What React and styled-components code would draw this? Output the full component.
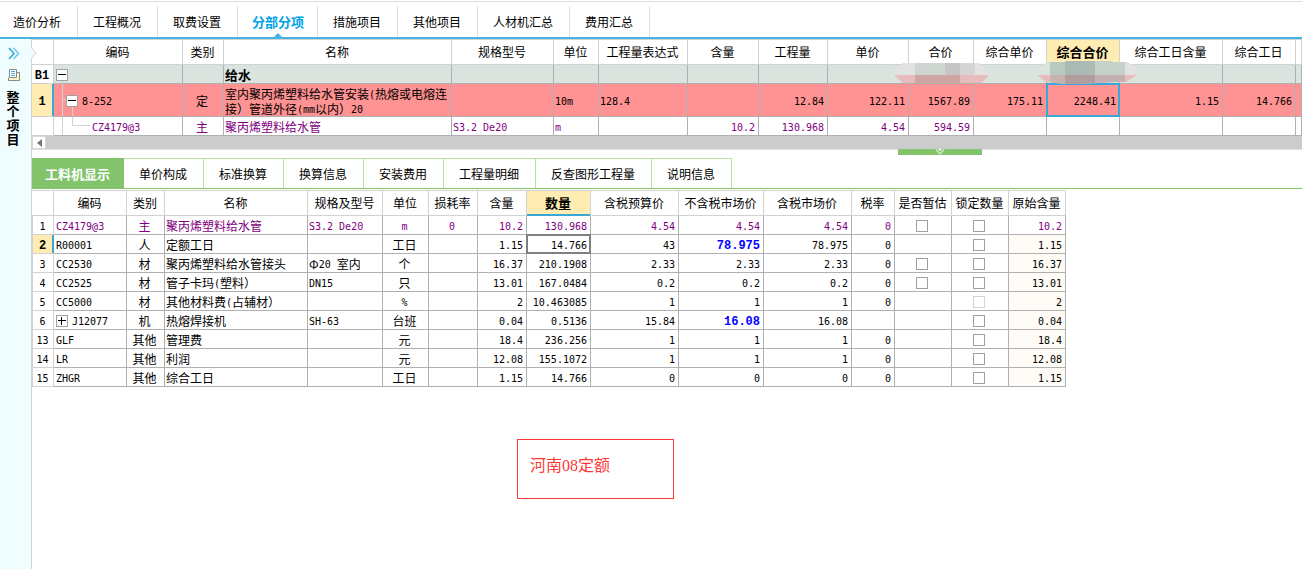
import { useState } from "react";
import styled, { createGlobalStyle, css } from "styled-components";

const colors = {
  blue: "#3aa8d6",
  line: "#d2d2d2",
  cellLine: "#b0b0b0",
  green: "#82c36b",
  lightGreen: "#b4e59b",
  yellow: "#ffecb3",
  red: "#ff9292",
  band: "#dae3de",
  purple: "#800080",
};

const mainTabs = [
  "造价分析",
  "工程概况",
  "取费设置",
  "分部分项",
  "措施项目",
  "其他项目",
  "人材机汇总",
  "费用汇总",
];

const detailTabs = [
  "工料机显示",
  "单价构成",
  "标准换算",
  "换算信息",
  "安装费用",
  "工程量明细",
  "反查图形工程量",
  "说明信息",
];

const itemColumns = [
  { title: "", width: 22 },
  { title: "编码", width: 129 },
  { title: "类别", width: 41 },
  { title: "名称", width: 228 },
  { title: "规格型号", width: 102 },
  { title: "单位", width: 45 },
  { title: "工程量表达式", width: 89 },
  { title: "含量", width: 71 },
  { title: "工程量", width: 69 },
  { title: "单价", width: 81 },
  { title: "合价", width: 65 },
  { title: "综合单价", width: 73 },
  { title: "综合合价", width: 73, active: true },
  { title: "综合工日含量", width: 103 },
  { title: "综合工日", width: 73 },
  { title: "" },
];

const detailColumns = [
  { title: "", width: 22 },
  { title: "编码", width: 73 },
  { title: "类别", width: 38 },
  { title: "名称", width: 143 },
  { title: "规格及型号", width: 75 },
  { title: "单位", width: 46 },
  { title: "损耗率", width: 49 },
  { title: "含量", width: 49 },
  { title: "数量", width: 64, active: true },
  { title: "含税预算价", width: 88 },
  { title: "不含税市场价", width: 85 },
  { title: "含税市场价", width: 88 },
  { title: "税率", width: 43 },
  { title: "是否暂估", width: 57 },
  { title: "锁定数量", width: 57 },
  { title: "原始含量", width: 57 },
];

const details = [
  { no: 1, code: "CZ4179@3", kind: "主", name: "聚丙烯塑料给水管", spec: "S3.2 De20", unit: "m", loss: "0", content: "10.2", amount: "130.968", budget: "4.54", net: "4.54", gross: "4.54", rate: "0", estimate: true, main: true },
  { no: 2, code: "R00001", kind: "人", name: "定额工日", unit: "工日", content: "1.15", amount: "14.766", budget: "43", net: "78.975", gross: "78.975", rate: "0", changed: true, selected: true },
  { no: 3, code: "CC2530", kind: "材", name: "聚丙烯塑料给水管接头", spec: "Φ20 室内", unit: "个", content: "16.37", amount: "210.1908", budget: "2.33", net: "2.33", gross: "2.33", rate: "0", estimate: true },
  { no: 4, code: "CC2525", kind: "材", name: "管子卡玛(塑料）", spec: "DN15", unit: "只", content: "13.01", amount: "167.0484", budget: "0.2", net: "0.2", gross: "0.2", rate: "0", estimate: true },
  { no: 5, code: "CC5000", kind: "材", name: "其他材料费(占辅材）", unit: "%", content: "2", amount: "10.463085", budget: "1", net: "1", gross: "1", rate: "0", locked: true },
  { no: 6, code: "J12077", kind: "机", name: "热熔焊接机", spec: "SH-63", unit: "台班", content: "0.04", amount: "0.5136", budget: "15.84", net: "16.08", gross: "16.08", changed: true, children: true },
  { no: 13, code: "GLF", kind: "其他", name: "管理费", unit: "元", content: "18.4", amount: "236.256", budget: "1", net: "1", gross: "1", rate: "0" },
  { no: 14, code: "LR", kind: "其他", name: "利润", unit: "元", content: "12.08", amount: "155.1072", budget: "1", net: "1", gross: "1", rate: "0" },
  { no: 15, code: "ZHGR", kind: "其他", name: "综合工日", unit: "工日", content: "1.15", amount: "14.766", budget: "0", net: "0", gross: "0", rate: "0" },
];

// Latin runs get a half-width monospace face, everything else stays in the CJK font
const Mixed = ({ children, bold }) =>
  String(children ?? "")
    .split(/([\x20-\x7e]+)/)
    .filter(Boolean)
    .map((part, i) =>
      /^[\x20-\x7e]/.test(part) ? (
        <Latin key={i} $bold={bold}>
          {part}
        </Latin>
      ) : (
        part
      )
    );

const Columns = ({ columns }) => (
  <>
    <colgroup>
      {columns.map((col, i) => (
        <Col key={i} $width={col.width} />
      ))}
    </colgroup>
    <thead>
      <tr>
        {columns.map((col, i) => (
          <HeadCell key={i} scope="col" $active={col.active}>
            {col.title}
          </HeadCell>
        ))}
      </tr>
    </thead>
  </>
);

const Toggle = ({ label, open }) => (
  <ToggleButton type="button" aria-label={label}>
    <svg width="10" height="10" viewBox="0 0 10 10" stroke="#000" fill="none">
      <path d={open ? "M1 4.5H9" : "M1 4.5H9M4.5 1V9"} />
    </svg>
  </ToggleButton>
);

const Mosaic = () => (
  <MosaicLayer width="243" height="23" viewBox="0 0 243 23" aria-hidden="true">
    <clipPath id="pillA">
      <path d="M8 2H84L93 9V16L86 22H8L0 15V9Z" />
    </clipPath>
    <clipPath id="pillB">
      <path d="M153 1H169L172 0H216L219 1H232L242 7V14L231 21H219L186 23H171L151 21L142 14H148V3Z" />
    </clipPath>
    <g clipPath="url(#pillA)">
      <rect width="20" height="14" fill="#e2e2e2" />
      <rect x="20" width="30" height="14" fill="#cfd5d1" />
      <rect x="50" width="15" height="14" fill="#c5c6c5" />
      <rect x="65" width="15" height="14" fill="#d5d5d5" />
      <rect x="80" width="15" height="14" fill="#e2e2e2" />
      <rect y="14" width="95" height="9" fill="#e6bcbc" />
      <rect x="20" y="14" width="45" height="9" fill="#cea5a3" />
    </g>
    <g clipPath="url(#pillB)">
      <rect x="142" width="13" height="14" fill="#dbe3df" />
      <rect x="155" width="15" height="14" fill="#b8c9bf" />
      <rect x="170" width="30" height="14" fill="#abbab4" />
      <rect x="200" width="30" height="14" fill="#c5d1c9" />
      <rect x="230" width="13" height="14" fill="#e2e2e2" />
      <rect x="142" y="14" width="101" height="9" fill="#e6bcbc" />
      <rect x="155" y="14" width="15" height="9" fill="#c8b2af" />
      <rect x="170" y="14" width="30" height="9" fill="#b09d9e" />
      <rect x="200" y="14" width="30" height="9" fill="#c5b0b1" />
    </g>
  </MosaicLayer>
);

function App() {
  const [mainTab, setMainTab] = useState("分部分项");
  const [detailTab, setDetailTab] = useState("工料机显示");

  return (
    <Page>
      <GlobalStyle />
      <MainTabs>
        {mainTabs.map((tab) => (
          <MainTab
            key={tab}
            type="button"
            $active={tab === mainTab}
            onClick={() => setMainTab(tab)}
          >
            {tab}
          </MainTab>
        ))}
      </MainTabs>

      <Body>
        <Sidebar>
          <IconButton type="button" aria-label="展开">
            <svg width="12" height="13" viewBox="0 0 12 13" fill="none" strokeWidth="1.5">
              <path d="M1 1L6 6.5L1 12" stroke="#2da3e0" />
              <path d="M5.5 1L10.5 6.5L5.5 12" stroke="#74c4ea" />
            </svg>
          </IconButton>
          <IconButton type="button" aria-label="项目">
            <svg width="12" height="12" viewBox="0 0 12 12" fill="none">
              <path d="M8.5 3.5H11.5V11.5H0.5V8.5" fill="#fff4c4" stroke="#8a8a8a" />
              <path d="M1.5 0.5H8.5V8.5H1.5Z" fill="#fff" stroke="#8a8a8a" />
              <path d="M3 2.5H7M3 4.5H7M3 6.5H7" stroke="#4aa9d8" />
            </svg>
          </IconButton>
          <SideTitle>整个项目</SideTitle>
        </Sidebar>

        <Content>
          <ItemPanel>
            <Notch width="6" height="12" viewBox="0 0 6 12" aria-hidden="true">
              <path d="M0 0L5 6L0 12Z" fill="#f0fdff" />
              <path d="M0 0L5 6L0 12" fill="none" stroke="#d2d2d2" />
            </Notch>
            <Grid $fill>
              <Columns columns={itemColumns} />
              <tbody>
                <Row $background={colors.band}>
                  <NumberCell>
                    <Mixed bold>B1</Mixed>
                  </NumberCell>
                  <TreeCell>
                    <Guide width="60" height="18" viewBox="0 0 60 18">
                      <path d="M8.5 14V18" />
                    </Guide>
                    <TreeItem $level={0}>
                      <Toggle label="折叠给水" open />
                    </TreeItem>
                  </TreeCell>
                  <Cell />
                  <Cell>
                    <b>给水</b>
                  </Cell>
                  {itemColumns.slice(4).map((col, i) => (
                    <Cell key={i} />
                  ))}
                </Row>
                <Row $background={colors.red} $height={33}>
                  <NumberCell $active>
                    <Mixed bold>1</Mixed>
                  </NumberCell>
                  <TreeCell>
                    <Guide width="60" height="32" viewBox="0 0 60 32">
                      <path d="M8.5 0V32M8 15.5H12M18.5 22V32" />
                    </Guide>
                    <TreeItem $level={1}>
                      <Toggle label="折叠8-252" open />
                      <span>
                        <Mixed>8-252</Mixed>
                      </span>
                    </TreeItem>
                  </TreeCell>
                  <Cell $align="center">定</Cell>
                  <Cell $wrap>
                    <Mixed>室内聚丙烯塑料给水管安装(热熔或电熔连</Mixed>
                    <br />
                    <Mixed>接）管道外径(mm以内）20</Mixed>
                  </Cell>
                  <Cell />
                  <Cell>
                    <Mixed>10m</Mixed>
                  </Cell>
                  <Cell>
                    <Mixed>128.4</Mixed>
                  </Cell>
                  <Cell />
                  {["12.84", "122.11", "1567.89", "175.11"].map((value) => (
                    <Cell key={value} $align="right">
                      <Mixed>{value}</Mixed>
                    </Cell>
                  ))}
                  <Cell $align="right" $frame={colors.blue}>
                    <Mixed>2248.41</Mixed>
                  </Cell>
                  <Cell $align="right">
                    <Mixed>1.15</Mixed>
                  </Cell>
                  <Cell $align="right">
                    <Mixed>14.766</Mixed>
                  </Cell>
                  <Cell />
                </Row>
                <Row $color={colors.purple}>
                  <NumberCell />
                  <TreeCell>
                    <Guide width="60" height="18" viewBox="0 0 60 18">
                      <path d="M8.5 0V18M18.5 0V8.5H36" />
                    </Guide>
                    <TreeItem $level={2}>
                      <span>
                        <Mixed>CZ4179@3</Mixed>
                      </span>
                    </TreeItem>
                  </TreeCell>
                  <Cell $align="center">主</Cell>
                  <Cell>聚丙烯塑料给水管</Cell>
                  <Cell>
                    <Mixed>S3.2 De20</Mixed>
                  </Cell>
                  <Cell>
                    <Mixed>m</Mixed>
                  </Cell>
                  <Cell />
                  {["10.2", "130.968", "4.54", "594.59"].map((value) => (
                    <Cell key={value} $align="right">
                      <Mixed>{value}</Mixed>
                    </Cell>
                  ))}
                  {itemColumns.slice(11).map((col, i) => (
                    <Cell key={i} />
                  ))}
                </Row>
              </tbody>
            </Grid>
            <Mosaic />
          </ItemPanel>

          <ScrollTrack>
            <ScrollButton type="button" aria-label="向左滚动">
              <svg width="5" height="8" viewBox="0 0 5 8" fill="#777568">
                <path d="M5 0V8L0 4Z" />
              </svg>
            </ScrollButton>
          </ScrollTrack>
          <Splitter>
            <CollapseButton type="button" aria-label="收起">
              <svg width="10" height="6" viewBox="0 0 10 6">
                <path d="M3 0H7L5 2Z" fill="#fff" />
                <path d="M1 0.5L5 5L9 0.5" fill="none" stroke="#d3ecca" strokeWidth="1.3" />
              </svg>
            </CollapseButton>
          </Splitter>

          <DetailTabs>
            {detailTabs.map((tab) => (
              <DetailTab
                key={tab}
                type="button"
                $active={tab === detailTab}
                onClick={() => setDetailTab(tab)}
              >
                {tab}
              </DetailTab>
            ))}
          </DetailTabs>

          <DetailPanel>
            <Grid>
              <Columns columns={detailColumns} />
              <tbody>
                {details.map((row) => (
                  <Row key={row.no} $color={row.main && colors.purple}>
                    <NumberCell $active={row.selected}>
                      <Mixed bold={row.selected}>{row.no}</Mixed>
                    </NumberCell>
                    <TreeCell>
                      <TreeItem $level={0}>
                        {row.children && <Toggle label={`展开${row.code}`} />}
                        <span>
                          <Mixed>{row.code}</Mixed>
                        </span>
                      </TreeItem>
                    </TreeCell>
                    <Cell $align="center">{row.kind}</Cell>
                    <Cell>
                      <Mixed>{row.name}</Mixed>
                    </Cell>
                    <Cell>
                      <Mixed>{row.spec}</Mixed>
                    </Cell>
                    <Cell $align="center">
                      <Mixed>{row.unit}</Mixed>
                    </Cell>
                    <Cell $align="center">
                      <Mixed>{row.loss}</Mixed>
                    </Cell>
                    <Cell $align="right">
                      <Mixed>{row.content}</Mixed>
                    </Cell>
                    <Cell $align="right" $frame={row.selected && "#808080"}>
                      <Mixed>{row.amount}</Mixed>
                    </Cell>
                    <Cell $align="right">
                      <Mixed>{row.budget}</Mixed>
                    </Cell>
                    <Cell $align="right" $changed={row.changed}>
                      <Mixed bold={row.changed}>{row.net}</Mixed>
                    </Cell>
                    <Cell $align="right">
                      <Mixed>{row.gross}</Mixed>
                    </Cell>
                    <Cell $align="right">
                      <Mixed>{row.rate}</Mixed>
                    </Cell>
                    <Cell $align="center">
                      {row.estimate && (
                        <Checkbox type="checkbox" aria-label={`是否暂估 ${row.code}`} />
                      )}
                    </Cell>
                    <Cell $align="center">
                      <Checkbox
                        type="checkbox"
                        disabled={row.locked}
                        aria-label={`锁定数量 ${row.code}`}
                      />
                    </Cell>
                    <Cell $align="right" $tinted={!row.main}>
                      <Mixed>{row.content}</Mixed>
                    </Cell>
                  </Row>
                ))}
              </tbody>
            </Grid>
          </DetailPanel>

          <Note>河南08定额</Note>
        </Content>
      </Body>
    </Page>
  );
}

export default App;

const GlobalStyle = createGlobalStyle`
  * {
    box-sizing: border-box;
  }
  body {
    margin: 0;
    background: #fff;
    color: #000;
    font: 12px/16px "Noto Sans CJK SC", sans-serif;
  }
  button {
    margin: 0;
    padding: 0;
    border: 0;
    background: none;
    color: inherit;
    font: inherit;
    cursor: pointer;
  }
  svg {
    display: block;
  }
`;

const Page = styled.div`
  display: flex;
  flex-direction: column;
  min-height: 100vh;
  padding-top: 1px;
  overflow: hidden;
`;

const MainTabs = styled.nav`
  display: flex;
  flex: none;
  height: 38px;
  padding-top: 4px;
  border-top: 1px solid #dedede;
  border-bottom: 2px solid #45b4e3;
`;

const MainTab = styled.button`
  position: relative;
  flex: none;
  padding: 0 16px 0 15px;
  border-right: 1px solid #dedede;
  white-space: nowrap;

  &:first-child {
    padding-left: 13px;
  }

  ${({ $active }) =>
    $active &&
    css`
      padding: 0 13px 0 14px;
      color: #00a2e8;
      font-size: 13px;
      font-weight: bold;

      &::after {
        content: "";
        position: absolute;
        bottom: 0;
        left: 50%;
        margin-left: -4px;
        border: 4px solid transparent;
        border-top: 0;
        border-bottom-color: #45b4e3;
      }
    `}
`;

const Body = styled.div`
  display: flex;
  flex: 1;
`;

const Sidebar = styled.aside`
  display: flex;
  flex: none;
  flex-direction: column;
  align-items: center;
  width: 32px;
  padding: 8px 5px 0 0;
  border-right: 1px solid ${colors.line};
  background: #f0fdff;
`;

const IconButton = styled.button`
  margin: 0 0 9px 2px;
`;

const SideTitle = styled.div`
  width: 13px;
  font-size: 13px;
  font-weight: bold;
  line-height: 14px;
`;

const Content = styled.main`
  flex: 1;
  min-width: 0;
`;

const ItemPanel = styled.section`
  position: relative;
  border-top: 1px solid ${colors.line};
`;

const Notch = styled.svg`
  position: absolute;
  top: 7px;
  left: -1px;
  z-index: 1;
`;

const MosaicLayer = styled.svg`
  position: absolute;
  top: 21px;
  left: 863px;
  z-index: 2;
`;

const Grid = styled.table`
  width: ${({ $fill }) => ($fill ? "100%" : "1034px")};
  border-collapse: separate;
  border-spacing: 0;
  table-layout: fixed;
`;

const Col = styled.col`
  width: ${({ $width }) => ($width ? `${$width}px` : "auto")};
`;

const HeadCell = styled.th`
  position: relative;
  height: 25px;
  padding: 0 1px 0 0;
  border-right: 1px solid ${colors.line};
  border-bottom: 1px solid ${colors.line};
  font-weight: normal;
  white-space: nowrap;

  ${({ $active }) =>
    $active &&
    css`
      background: ${colors.yellow};
      font-size: 13px;
      font-weight: bold;

      &::after {
        content: "";
        position: absolute;
        right: 0;
        bottom: -1px;
        left: 0;
        height: 2px;
        background: ${colors.blue};
      }
    `}
`;

const Row = styled.tr`
  height: ${({ $height }) => $height || 19}px;
  background: ${({ $background }) => $background || "#fff"};
  color: ${({ $color }) => $color || "#000"};
`;

const Cell = styled.td`
  position: relative;
  padding: 1px 3px 0 1px;
  border-right: 1px solid ${colors.cellLine};
  border-bottom: 1px solid ${colors.cellLine};
  background: ${({ $tinted }) => ($tinted ? "#fffcf7" : "transparent")};
  color: ${({ $changed }) => ($changed ? "#00f" : "inherit")};
  line-height: ${({ $wrap }) => ($wrap ? 15 : 16)}px;
  text-align: ${({ $align }) => $align || "left"};
  white-space: nowrap;

  b {
    font-size: 13px;
  }

  ${({ $frame }) =>
    $frame &&
    css`
      &::after {
        content: "";
        position: absolute;
        inset: -1px;
        border: 2px solid ${$frame};
      }
    `}
`;

const NumberCell = styled(Cell)`
  padding: 1px 1px 0 0;
  border-color: ${colors.line};
  background: ${({ $active }) => ($active ? colors.yellow : "#fff")};
  color: #000;
  text-align: center;

  ${({ $active }) =>
    $active &&
    css`
      &::after {
        content: "";
        position: absolute;
        top: 0;
        right: -1px;
        bottom: 0;
        width: 2px;
        background: ${colors.blue};
      }
    `}
`;

const TreeCell = styled(Cell)`
  padding: 1px 0 0;
`;

const Guide = styled.svg`
  position: absolute;
  top: 0;
  left: 0;
  fill: none;
  stroke: ${colors.line};
`;

const TreeItem = styled.div`
  position: relative;
  display: flex;
  align-items: center;
  gap: 4px;
  padding-left: ${({ $level }) => [2, 12, 38][$level]}px;
`;

const ToggleButton = styled.button`
  width: 12px;
  height: 12px;
  border: 1px solid #a0a0a0;
  background: #fff;
`;

const Latin = styled.span`
  font-family: "DejaVu Sans Mono", monospace;
  font-size: 10px;
  line-height: 0;
  vertical-align: 1px;
  white-space: pre;

  ${({ $bold }) =>
    $bold &&
    css`
      font-family: "Liberation Mono", monospace;
      font-size: 12px;
      font-weight: bold;
    `}
`;

const Checkbox = styled.input`
  display: block;
  width: 12px;
  height: 12px;
  margin: 0 auto;
  border: 1px solid #a0a0a0;
  background: #fff;
  appearance: none;

  &:checked {
    background: ${colors.blue};
  }

  &:disabled {
    border-color: #d4d4d4;
  }
`;

const ScrollTrack = styled.div`
  height: 13px;
  background: #ccc;
`;

const ScrollButton = styled.button`
  display: flex;
  align-items: center;
  justify-content: center;
  width: 14px;
  height: 13px;
  border: 1px solid #d8d8d8;
  background: #fff;
`;

const Splitter = styled.div`
  height: 9px;
  border-top: 1px solid #e0e0e0;
`;

const CollapseButton = styled.button`
  display: flex;
  justify-content: center;
  width: 84px;
  height: 6px;
  margin: -1px 0 0 866px;
  background: ${colors.green};
`;

const DetailTabs = styled.nav`
  display: flex;
  height: 31px;
  border-bottom: 1px solid ${colors.green};
`;

const DetailTab = styled.button`
  flex: none;
  padding: 0 16px 0 15px;
  border-top: 1px solid ${colors.lightGreen};
  border-right: 1px solid ${colors.lightGreen};
  white-space: nowrap;

  ${({ $active }) =>
    $active &&
    css`
      padding: 0 13px;
      border-color: ${colors.green};
      background: ${colors.green};
      color: #fff;
      font-size: 13px;
      font-weight: bold;
    `}
`;

const DetailPanel = styled.section`
  width: fit-content;
  margin-top: 1px;
  border-top: 1px solid ${colors.line};

  td:first-child {
    border-left: 1px solid ${colors.line};
  }
`;

const Note = styled.div`
  width: 157px;
  margin: 52px 0 0 485px;
  padding: 16px 12px 22px;
  border: 1px solid #ff3737;
  color: #ff3737;
  font: 16px/20px "Liberation Serif", "Noto Sans CJK SC", serif;
`;
